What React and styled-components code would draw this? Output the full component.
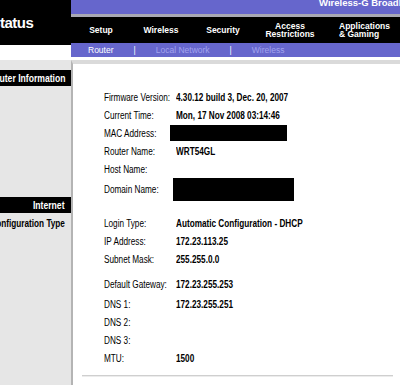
import React from "react";
import styled, { createGlobalStyle } from "styled-components";

const Global = createGlobalStyle`
  html, body { margin: 0; padding: 0; background: #fff; }
  body { overflow: hidden; font-family: "Liberation Sans", Arial, sans-serif; }
`;

const SANS = `"Liberation Sans", Arial, sans-serif`;
const PURPLE = "#6666cc";

const Page = styled.div`
  width: 400px;
  height: 385px;
  display: flex;
  flex-direction: column;
  overflow: hidden;
`;

const Header = styled.div`
  display: grid;
  grid-template-columns: 71px 1fr;
  height: 57px;
  flex: none;
`;

const Brand = styled.div`
  height: 45px;
  background: #000;
  color: #fff;
  font: bold 15px ${SANS};
  letter-spacing: -0.5px;
  padding-top: 14px;
  box-sizing: border-box;
  overflow: hidden;
  white-space: nowrap;
`;

const BrandText = styled.span`
  display: block;
  margin-left: -9.5px;
  line-height: normal;
`;

const HeaderRight = styled.div`
  display: flex;
  flex-direction: column;
  min-width: 0;
`;

const ProductBar = styled.div`
  height: 14px;
  background: ${PURPLE};
  overflow: hidden;
  white-space: nowrap;
  padding-left: 248px;
`;

const ProductTitle = styled.div`
  color: #fff;
  font: bold 9.5px ${SANS};
  line-height: 12px;
  margin-top: -3px;
`;

const Rule = styled.div`
  height: 3px;
  background: #a8a8b4;
`;

const NavBar = styled.div`
  height: 26px;
  background: #000;
  display: flex;
  align-items: center;
`;

const NavItem = styled.div`
  width: ${(p) => p.$w}px;
  flex: none;
  text-align: ${(p) => p.$align || "center"};
  padding-left: ${(p) => p.$pl || 0}px;
  box-sizing: border-box;
  color: #fff;
  font: bold 8.5px ${SANS};
  line-height: 8.5px;
  white-space: nowrap;
`;

const SubNav = styled.div`
  height: 14px;
  background: ${PURPLE};
  display: flex;
  align-items: center;
  gap: 20px;
  padding-left: 17px;
  font: 8.5px ${SANS};
  white-space: nowrap;
`;

const SubItem = styled.span`
  color: ${(p) => (p.$active ? "#ffffff" : "#a3a3ee")};
`;

const SubSep = styled.span`
  color: #ffffff;
`;

/* The reference renders its body text narrower than Arial: condense it */
const Narrow = styled.span`
  display: inline-block;
  transform: scaleX(0.82);
  transform-origin: ${(p) => (p.$right ? "right" : "left")} center;
`;

const Body = styled.div`
  flex: 1;
  margin-top: 3px;
  display: grid;
  grid-template-columns: 71px 1fr;
  min-height: 0;
`;

const Sidebar = styled.div`
  background: #e6e6e6;
  display: flex;
  flex-direction: column;
  overflow: hidden;
`;

const SectionBar = styled.div`
  height: 16px;
  margin-top: ${(p) => p.$mt}px;
  background: #000;
  color: #fff;
  display: flex;
  justify-content: flex-end;
  align-items: center;
  padding-right: 6px;
  font: bold 10.5px ${SANS};
  white-space: nowrap;
  overflow: hidden;
`;

const SubHeading = styled.div`
  margin-top: ${(p) => p.$mt}px;
  height: 12px;
  display: flex;
  justify-content: flex-end;
  align-items: center;
  padding-right: 6px;
  color: #000;
  font: bold 10px ${SANS};
  white-space: nowrap;
  overflow: hidden;
`;

const Panel = styled.div`
  background: #fff;
  border-top: 4px solid #dadada;
  border-left: 2px solid #b4b4b4;
  padding: 24px 7px 0 31px;
  display: flex;
  flex-direction: column;
  min-width: 0;
`;

const Row = styled.div`
  display: flex;
  align-items: center;
  height: ${(p) => p.$h || 18}px;
  margin-top: ${(p) => p.$mt || 0}px;
  font: 10px ${SANS};
  color: #000;
  white-space: nowrap;
`;

const Label = styled.div`
  width: 72px;
  flex: none;
`;

const Value = styled.div`
  font-weight: bold;
`;

const Redacted = styled.div`
  background: #000;
  width: ${(p) => p.$w}px;
  height: ${(p) => p.$h}px;
  margin-left: ${(p) => p.$ml}px;
`;

const Divider = styled.div`
  margin: 8px 0 0 -22px;
  height: 1px;
  background: #cfcfcf;
  border-bottom: 1px solid #ececec;
`;

const rows = [
  { label: "Firmware Version:", value: "4.30.12 build 3, Dec. 20, 2007" },
  { label: "Current Time:", value: "Mon, 17 Nov 2008 03:14:46" },
  { label: "MAC Address:", redact: { w: 117, h: 16, ml: -6 } },
  { label: "Router Name:", value: "WRT54GL" },
  { label: "Host Name:" },
  { label: "Domain Name:", h: 23, redact: { w: 121, h: 23, ml: -3 } },
  { label: "Login Type:", mt: 13, value: "Automatic Configuration - DHCP" },
  { label: "IP Address:", value: "172.23.113.25" },
  { label: "Subnet Mask:", value: "255.255.0.0" },
  { label: "Default Gateway:", mt: 7, value: "172.23.255.253" },
  { label: "DNS 1:", mt: 2, value: "172.23.255.251" },
  { label: "DNS 2:" },
  { label: "DNS 3:" },
  { label: "MTU:", value: "1500" },
];

const nav = [
  { w: 60, text: ["Setup"] },
  { w: 60, text: ["Wireless"] },
  { w: 64, text: ["Security"] },
  { w: 70, text: ["Access", "Restrictions"] },
  { w: 75, text: ["Applications", "& Gaming"], align: "left", pl: 14 },
];

export default function App() {
  return (
    <Page>
      <Global />
      <Header>
        <Brand>
          <BrandText>Status</BrandText>
        </Brand>
        <HeaderRight>
          <ProductBar>
            <ProductTitle>Wireless-G Broadband Router</ProductTitle>
          </ProductBar>
          <Rule />
          <NavBar>
            {nav.map((n) => (
              <NavItem key={n.text[0]} $w={n.w} $align={n.align} $pl={n.pl}>
                {n.text.map((t, i) => (
                  <div key={i}>{t}</div>
                ))}
              </NavItem>
            ))}
          </NavBar>
          <SubNav>
            <SubItem $active>Router</SubItem>
            <SubSep>|</SubSep>
            <SubItem>Local Network</SubItem>
            <SubSep>|</SubSep>
            <SubItem>Wireless</SubItem>
          </SubNav>
        </HeaderRight>
      </Header>
      <Body>
        <Sidebar>
          <SectionBar $mt={10}>
            <Narrow $right>Router Information</Narrow>
          </SectionBar>
          <SectionBar $mt={111}>
            <Narrow $right>Internet</Narrow>
          </SectionBar>
          <SubHeading $mt={4}>
            <Narrow $right>Configuration Type</Narrow>
          </SubHeading>
        </Sidebar>
        <Panel>
          {rows.map((r) => (
            <Row key={r.label} $h={r.h} $mt={r.mt}>
              <Label>
                <Narrow>{r.label}</Narrow>
              </Label>
              {r.value && (
                <Value>
                  <Narrow>{r.value}</Narrow>
                </Value>
              )}
              {r.redact && (
                <Redacted $w={r.redact.w} $h={r.redact.h} $ml={r.redact.ml} />
              )}
            </Row>
          ))}
          <Divider />
        </Panel>
      </Body>
    </Page>
  );
}
